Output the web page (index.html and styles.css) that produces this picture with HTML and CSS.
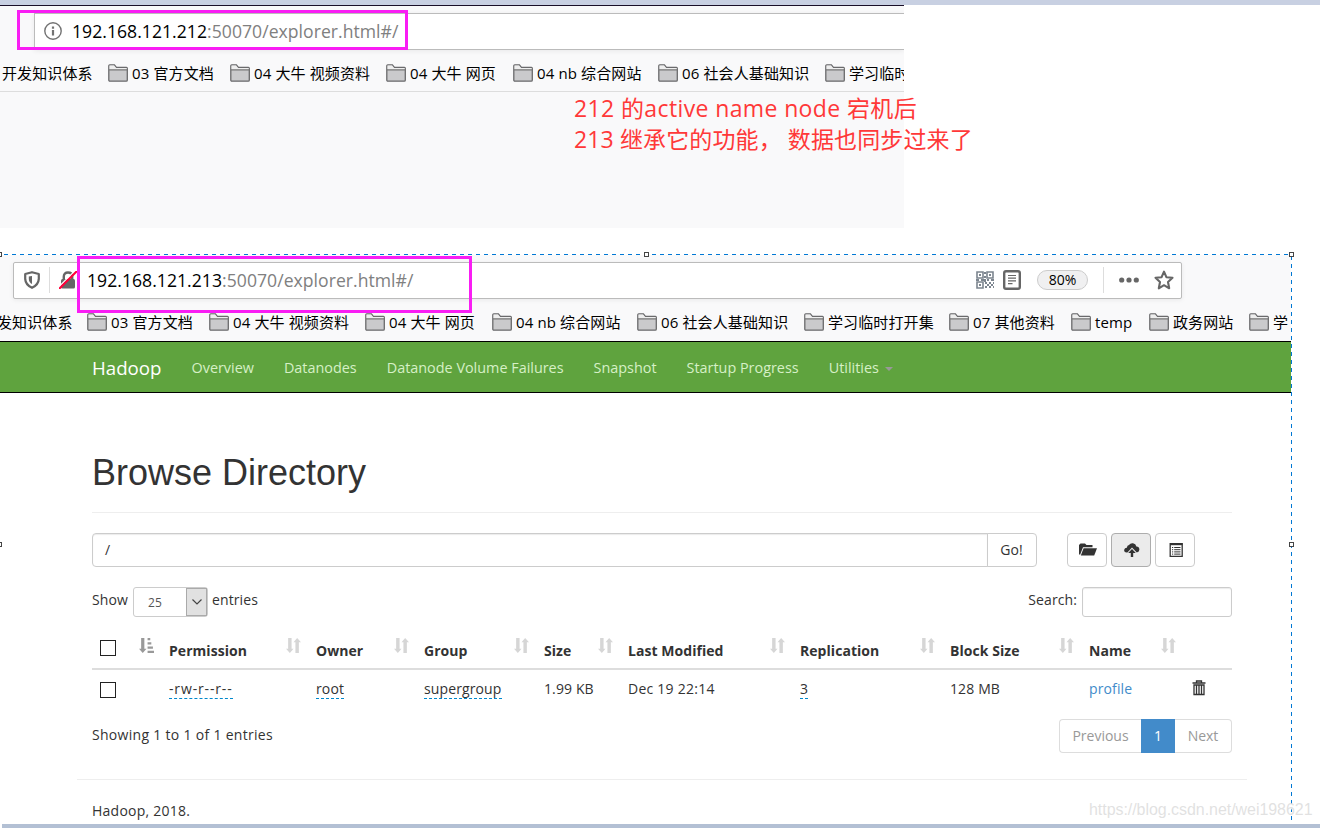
FILE: index.html
```html
<!DOCTYPE html>
<html lang="zh-CN">
  <head>
    <meta charset="UTF-8" />
    <meta name="viewport" content="width=device-width, initial-scale=1.0" />
    <title>Browsing HDFS</title>
    <link rel="stylesheet" href="styles.css">
  </head>
  <body>
    <!-- shared icons -->
    <svg class="defs">
      <symbol id="folder" viewBox="0 0 20 18">
        <path d="M.8 16V1.8Q.8.8 1.8.8H6.4L8.4 3.4H18.5Q19.3 3.4 19.3 4.4V16Q19.3 17.2 18.2 17.2H1.9Q.8 17.2.8 16Z" fill="#cacacc" stroke="#6a6a6c" stroke-width="1.3" />
        <path d="M1.5 1.5H6L8 4.1H18.6V5.2H1.5Z" fill="#eee" />
        <path d="M1 5.9H19" stroke="#777" stroke-width="1.2" />
      </symbol>
      <symbol id="sort" viewBox="0 0 14 14">
        <path d="M2 0H5.2V10H7L3.6 14 0 10H2ZM8.8 14H12V4H14L10.4 0 7 4H8.8Z" />
      </symbol>
      <symbol id="sort-asc" viewBox="0 0 14 14">
        <path d="M2 0H5V10H7L3.5 14 0 10H2ZM8 0H10.5V2H8ZM8 4H11.5V6H8ZM8 8H13V10H8ZM8 12H14V14H8Z" />
      </symbol>
    </svg>

    <div class="top-strip"></div>

    <section class="window window-old">
      <div class="url-bar url-old">
        <svg class="info" viewBox="0 0 18 18" fill="none" stroke="#737373">
          <circle cx="9" cy="9" r="8.2" stroke-width="1.4" />
          <path d="M9 8V13.5M9 4.5V6.7" stroke-width="2.2" />
        </svg>
        <span class="url"><b>192.168.121.212</b>:50070/explorer.html#/</span>
      </div>
      <div class="bookmarks">
        <span class="mark">开发知识体系</span>
        <span class="mark"><svg><use href="#folder" /></svg>03 官方文档</span>
        <span class="mark"><svg><use href="#folder" /></svg>04 大牛 视频资料</span>
        <span class="mark"><svg><use href="#folder" /></svg>04 大牛 网页</span>
        <span class="mark"><svg><use href="#folder" /></svg>04 nb 综合网站</span>
        <span class="mark"><svg><use href="#folder" /></svg>06 社会人基础知识</span>
        <span class="mark"><svg><use href="#folder" /></svg>学习临时</span>
      </div>
    </section>

    <section class="window window-new">
      <div class="url-bar url-new">
        <svg class="shield" viewBox="0 0 16 18">
          <path d="M8 1.2 14.8 3V8.2Q14.4 14 8 16.8 1.6 14 1.2 8.2V3Z" fill="none" stroke="#666" stroke-width="2.2" stroke-linejoin="round" />
          <path d="M8 5V13Q5 11.5 4.8 8V5.6Z" fill="#666" />
        </svg>
        <i class="divider"></i>
        <svg class="lock" viewBox="0 0 18 18">
          <path d="M4.8 9V5.5Q4.8 1.5 9 1.5T13.2 5.5V9" fill="none" stroke="#666" stroke-width="2.4" />
          <rect x="2" y="8" width="14" height="9.5" rx="1.5" fill="#666" />
          <path d="M-.3 16 15.7 0" stroke="#fff" stroke-width="1.2" />
          <path d="M.5 17.5 17.5.5" stroke="#ff0039" stroke-width="2" stroke-linecap="round" />
        </svg>
        <span class="url"><b>192.168.121.213</b>:50070/explorer.html#/</span>
        <div class="actions">
          <svg class="qr" viewBox="0 0 18 18" fill="none" stroke="#7c858f">
            <path d="M1 1H7V7H1ZM11 1H17V7H11ZM1 11H7V17H1Z" stroke-width="1.6" />
            <path d="M3 4H5M13 4H15M3 14H5M8 2H10M8 6H10M0 9H3M5 9H8M9 8V11M11 9H13M15 9H18" stroke-width="2" />
            <path d="M9 12H18M11 14H18M9 16H18" stroke-width="2" stroke-dasharray="2" />
          </svg>
          <svg class="reader" viewBox="0 0 18 20" fill="none" stroke="#666">
            <rect x="1.2" y="1.2" width="15.6" height="17.6" rx="1.8" stroke-width="2.4" />
            <path d="M5 5.5H13M5 8.2H13M5 10.9H13M5 13.6H9.5" stroke-width="1.2" />
          </svg>
          <span class="zoom">80%</span>
          <i class="divider"></i>
          <svg class="dots" viewBox="0 0 20 6" fill="#666">
            <circle cx="2.7" cy="3" r="2.6" /><circle cx="10" cy="3" r="2.6" /><circle cx="17.3" cy="3" r="2.6" />
          </svg>
          <svg class="star" viewBox="0 0 20 20">
            <path d="M10 1.7 12.4 7.2 18.5 7.8 14 12 15.2 18.3 10 15.2 4.8 18.3 6 12 1.5 7.8 7.6 7.2Z" fill="none" stroke="#666" stroke-width="2.1" stroke-linejoin="round" />
          </svg>
        </div>
      </div>
      <div class="bookmarks">
        <span class="mark">发知识体系</span>
        <span class="mark"><svg><use href="#folder" /></svg>03 官方文档</span>
        <span class="mark"><svg><use href="#folder" /></svg>04 大牛 视频资料</span>
        <span class="mark"><svg><use href="#folder" /></svg>04 大牛 网页</span>
        <span class="mark"><svg><use href="#folder" /></svg>04 nb 综合网站</span>
        <span class="mark"><svg><use href="#folder" /></svg>06 社会人基础知识</span>
        <span class="mark"><svg><use href="#folder" /></svg>学习临时打开集</span>
        <span class="mark"><svg><use href="#folder" /></svg>07 其他资料</span>
        <span class="mark"><svg><use href="#folder" /></svg>temp</span>
        <span class="mark"><svg><use href="#folder" /></svg>政务网站</span>
        <span class="mark"><svg><use href="#folder" /></svg>学</span>
      </div>
    </section>

    <nav class="navbar">
      <a class="brand">Hadoop</a>
      <a>Overview</a>
      <a>Datanodes</a>
      <a>Datanode Volume Failures</a>
      <a>Snapshot</a>
      <a>Startup Progress</a>
      <a>Utilities <i class="caret"></i></a>
    </nav>

    <main class="container">
      <h1>Browse Directory</h1>

      <div class="toolbar">
        <div class="path">/</div>
        <div class="go">Go!</div>
        <div class="btn">
          <svg viewBox="0 0 18 14" fill="#333">
            <path d="M0 11V2L1.5.5H6L7.5 2H13.5V4.2H4L1 12Z" />
            <path d="M4.6 5.2H18L15.2 12.6H1.8Z" />
          </svg>
        </div>
        <div class="btn active">
          <svg viewBox="0 0 18 14" fill="#333">
            <path d="M3.6 9.6Q.8 9.4 1.2 6.8 1.6 5 3.8 4.8 4.2 2.2 6 2 7.4-.2 10 .2 12.8.6 13.4 3.4 16.3 3.4 16.4 6.4 16.5 9 13.8 9.4L9 4.6 4.4 9.6Z" />
            <path d="M9 6 12.8 10H10.2V14H7.8V10H5.2Z" />
          </svg>
        </div>
        <div class="btn">
          <svg viewBox="0 0 18 14">
            <path d="M3.2.6H15.2V13.4H3.2Z" fill="#fff" stroke="#333" stroke-width="1.3" />
            <path d="M3 1.2H15.5" stroke="#333" stroke-width="2" />
            <path d="M5 4.5H6.2M7.2 4.5H13.5M5 6.7H6.2M7.2 6.7H13.5M5 8.9H6.2M7.2 8.9H13.5M5 11.1H6.2M7.2 11.1H13.5" stroke="#333" />
          </svg>
        </div>
      </div>

      <div class="filters">
        <span class="show">Show</span>
        <div class="select">
          <span>25</span>
          <i><svg viewBox="0 0 10 6"><path d="M.5.5 5 5 9.5.5" fill="none" stroke="#444" stroke-width="1.2" /></svg></i>
        </div>
        <span>entries</span>
        <span class="search-label">Search:</span>
        <div class="search"></div>
      </div>

      <div class="grid head">
        <div><i class="check"></i><svg class="asc"><use href="#sort-asc" /></svg></div>
        <div>Permission<svg><use href="#sort" /></svg></div>
        <div>Owner<svg><use href="#sort" /></svg></div>
        <div>Group<svg><use href="#sort" /></svg></div>
        <div>Size<svg><use href="#sort" /></svg></div>
        <div>Last Modified<svg><use href="#sort" /></svg></div>
        <div>Replication<svg><use href="#sort" /></svg></div>
        <div>Block Size<svg><use href="#sort" /></svg></div>
        <div>Name<svg><use href="#sort" /></svg></div>
        <div></div>
      </div>
      <div class="grid row">
        <div><i class="check"></i></div>
        <div><span class="editable perm">-rw-r--r--</span></div>
        <div><span class="editable">root</span></div>
        <div><span class="editable">supergroup</span></div>
        <div>1.99 KB</div>
        <div class="date">Dec 19 22:14</div>
        <div><span class="editable">3</span></div>
        <div>128 MB</div>
        <div><a class="link">profile</a></div>
        <div>
          <svg class="trash" viewBox="0 0 14 16" fill="none" stroke="#333">
            <path d="M.5 3H13.5M4.5 2.5V1H9.5V2.5" stroke-width="1.3" />
            <path d="M2 5H12V14.5H2ZM4.5 5V14M7 5V14M9.5 5V14" stroke-width="1.3" />
          </svg>
        </div>
      </div>

      <div class="table-footer">
        <span class="count">Showing 1 to 1 of 1 entries</span>
        <div class="pages">
          <span class="prev">Previous</span>
          <span class="current">1</span>
          <span class="next">Next</span>
        </div>
      </div>

      <footer>Hadoop, 2018.</footer>
    </main>

    <!-- annotations drawn over the windows -->
    <div class="box box-old"></div>
    <div class="box box-new"></div>
    <div class="note">
      <p class="wide">212 的active name node 宕机后</p>
      <p>213 继承它的功能， 数据也同步过来了</p>
    </div>
    <div class="dash-top"></div>
    <div class="dash-right"></div>
    <i class="handle h1"></i>
    <i class="handle h2"></i>
    <i class="handle h3"></i>
    <i class="handle h4"></i>
    <i class="handle h5"></i>
    <div class="bottom-strip"></div>
    <div class="watermark">https://blog.csdn.net/wei198621</div>
  </body>
</html>
```
FILE: styles.css
```css
* {
  margin: 0;
  padding: 0;
  box-sizing: border-box;
}

body {
  position: relative;
  width: 1320px;
  height: 828px;
  overflow: hidden;
  background: #fff;
  color: #333;
  font-family: 'Open Sans', 'Noto Sans CJK SC', sans-serif;
  font-size: 14px;
  line-height: 20px;
}

svg {
  flex: none;
  display: block;
}

.defs {
  position: absolute;
  width: 0;
  height: 0;
}

.top-strip {
  height: 5px;
  background: #c8d0e2;
}

/* Browser windows */
.window {
  overflow: hidden;
  background: #f9f9fa;
}

.window-old {
  width: 904px;
  height: 223px;
  border-top: 1px solid #1a0f28;
}

.window-new {
  width: 1291px;
  height: 86px;
  margin-top: 27px;
  padding-top: 7px;
}

.url-bar {
  display: flex;
  align-items: center;
  height: 37px;
  background: #fff;
  border: 1px solid #bbb;
  box-shadow: 0 1px 5px rgba(0, 0, 0, 0.07);
}

.url-old {
  margin: 7px 0 0 34px;
  border-right: 0;
  padding: 0 0 2px 9px;
}

.url-new {
  width: 1169px;
  margin-left: 13px;
  padding: 0 7px 2px 10px;
  border-radius: 2px;
}

.url {
  color: #808080;
  font-size: 17.6px;
  letter-spacing: 0.03px;
}

.url b {
  color: #000;
  font-weight: normal;
}

.info {
  width: 18px;
  height: 18px;
  margin-right: 10px;
}

.shield {
  width: 16px;
  height: 18px;
}

.divider {
  width: 1px;
  height: 26px;
  margin: 0 9px;
  background: #ddd;
}

.lock {
  width: 18px;
  height: 18px;
  margin-right: 10px;
}

.actions {
  display: flex;
  align-items: center;
  margin-left: auto;
}

.qr {
  width: 18px;
  height: 18px;
}

.reader {
  width: 18px;
  height: 20px;
  margin: 0 16px 0 9px;
}

.zoom {
  width: 51px;
  height: 20px;
  border: 1px solid #ccc;
  border-radius: 10px;
  background: #f0f0f1;
  color: #000;
  line-height: 18px;
  text-align: center;
}

.actions .divider {
  margin: 0 15px;
}

.dots {
  width: 20px;
  height: 6px;
}

.star {
  width: 20px;
  height: 20px;
  margin-left: 15px;
}

.bookmarks {
  display: grid;
  grid-template-columns: 106px 122px 156px 127px 145px 167px 145px 122px 78px 100px 42px;
  align-items: center;
  height: 42px;
  padding-top: 4px;
  color: #000;
  font-size: 15px;
  white-space: nowrap;
}

.window-old .bookmarks {
  padding-left: 2px;
  border-bottom: 1px solid #ddd;
}

.window-new .bookmarks {
  grid-template-columns: 90px 122px 156px 127px 145px 167px 145px 122px 78px 100px 42px;
  margin-left: -3px;
}

.mark {
  display: flex;
  align-items: center;
  gap: 4px;
  letter-spacing: 0.12px;
}

.mark svg {
  width: 20px;
  height: 18px;
}

/* Hadoop page */
.navbar {
  display: flex;
  align-items: center;
  gap: 30px;
  width: 1291px;
  height: 52px;
  padding: 2px 0 0 92px;
  border-top: 1px solid #000;
  border-bottom: 1px solid #000;
  background: #5fa33e;
  color: #d6f0c6;
  font-size: 14.4px;
  white-space: nowrap;
}

.navbar .brand {
  color: #fff;
  font-size: 18.7px;
}

.caret {
  display: inline-block;
  margin-left: 2px;
  border: 4px solid transparent;
  border-top-color: #999;
  border-bottom: 0;
  vertical-align: middle;
}

.container {
  width: 1140px;
  margin-left: 92px;
}

h1 {
  height: 120px;
  padding-top: 60px;
  border-bottom: 1px solid #eee;
  font: 36px/40px 'Liberation Sans', Arial, sans-serif;
}

.toolbar {
  display: flex;
  margin-top: 20px;
  height: 34px;
}

.path,
.go {
  border: 1px solid #ccc;
  line-height: 32px;
}

.path {
  width: 896px;
  padding-left: 12px;
  border-radius: 4px 0 0 4px;
  box-shadow: inset 0 1px 1px rgba(0, 0, 0, 0.08);
}

.go {
  width: 50px;
  margin: 0 30px 0 -1px;
  padding-right: 1px;
  border-radius: 0 4px 4px 0;
  text-align: center;
}

.btn {
  display: flex;
  justify-content: center;
  align-items: center;
  width: 40px;
  margin-right: 4px;
  padding-left: 2px;
  border: 1px solid #ccc;
  border-radius: 4px;
}

.btn.active {
  border-color: #adadad;
  background: #ebebeb;
}

.btn svg {
  width: 18px;
  height: 14px;
}

.filters {
  display: flex;
  height: 30px;
  margin-top: 20px;
  line-height: 26px;
  letter-spacing: 0.1px;
}

.show {
  width: 36px;
}

.select {
  display: flex;
  justify-content: space-between;
  width: 75px;
  margin: 0 4px 0 5px;
  padding-left: 14px;
  border: 1px solid #ccc;
  border-radius: 3px;
  color: #555;
  font-size: 12px;
  line-height: 29px;
}

.select i {
  display: flex;
  justify-content: center;
  align-items: center;
  width: 21px;
  border: 1px solid #aaa;
  background: #e1e1e1;
}

.select svg {
  width: 10px;
  height: 6px;
}

.search-label {
  margin-left: auto;
}

.search {
  width: 150px;
  margin-left: 5px;
  border: 1px solid #ccc;
  border-radius: 3px;
  box-shadow: inset 0 1px 1px rgba(0, 0, 0, 0.08);
}

.grid {
  display: grid;
  grid-template-columns: 69px 147px 108px 120px 84px 172px 150px 139px 102px 49px;
}

.grid > div {
  display: flex;
  padding: 0 7px 0 8px;
  white-space: nowrap;
}

.head {
  height: 53px;
  border-bottom: 2px solid #ddd;
  font-weight: bold;
  padding-top: 20px;
  line-height: 27px;
  letter-spacing: 0.05px;
}

.head svg {
  width: 15px;
  height: 15px;
  margin: 1px 0 0 auto;
  fill: #d6d6d6;
}

.head .asc {
  fill: #999;
}

.check {
  width: 16px;
  height: 16px;
  margin-top: 3px;
  border: 1px solid #222;
}

.row {
  height: 49px;
  padding-top: 9px;
  letter-spacing: 0.12px;
}

.editable {
  height: 20px;
  border-bottom: 1px dashed #0088cc;
}

.perm {
  letter-spacing: 0.85px;
}

.date {
  letter-spacing: 0.25px;
}

.link {
  color: #428bca;
}

.trash {
  width: 14px;
  height: 16px;
  margin: 1px 0 0 1px;
}

.table-footer {
  display: flex;
  justify-content: space-between;
  height: 34px;
  line-height: 32px;
}

.count {
  letter-spacing: 0.3px;
}

.pages {
  display: flex;
  width: 173px;
  color: #999;
  text-align: center;
}

.pages span {
  border: 1px solid #ddd;
}

.pages .prev {
  width: 82px;
  border-right: 0;
  border-radius: 4px 0 0 4px;
}

.pages .current {
  width: 34px;
  border-color: #428bca;
  background: #428bca;
  color: #fff;
}

.pages .next {
  width: 57px;
  border-left: 0;
  border-radius: 0 4px 4px 0;
}

footer {
  margin: 26px -15px 0;
  padding: 21px 15px 0;
  border-top: 1px solid #eee;
  letter-spacing: 0.25px;
}

/* Annotations */
.box {
  position: absolute;
  border: 3px solid #f91df4;
}

.box-old {
  left: 17px;
  top: 10px;
  width: 391px;
  height: 40px;
}

.box-new {
  left: 77px;
  top: 256px;
  width: 395px;
  height: 57px;
}

.note {
  position: absolute;
  left: 574px;
  top: 93px;
  color: #ff3838;
  font-size: 23px;
  line-height: 31px;
  letter-spacing: 0.12px;
  white-space: nowrap;
}

.note .wide {
  letter-spacing: 0.38px;
}

.dash-top {
  position: absolute;
  left: 4px;
  top: 254px;
  width: 1287px;
  height: 1px;
  background: repeating-linear-gradient(90deg, #0078d4 0 4px, transparent 4px 8px);
}

.dash-right {
  position: absolute;
  left: 1291px;
  top: 256px;
  width: 1px;
  height: 572px;
  background: repeating-linear-gradient(#0078d4 0 4px, #fff 4px 8px);
}

.handle {
  position: absolute;
  width: 5px;
  height: 5px;
  border: 1px solid #444;
  background: #fff;
}

.handle.h1 {
  left: -3px;
  top: 252px;
}

.handle.h2 {
  left: 644px;
  top: 252px;
}

.handle.h3 {
  left: 1289px;
  top: 252px;
}

.handle.h4 {
  left: -3px;
  top: 542px;
}

.handle.h5 {
  left: 1289px;
  top: 542px;
}

.bottom-strip {
  position: absolute;
  left: 2px;
  right: 0;
  bottom: 0;
  height: 4px;
  background: #b3c0d4;
}

.watermark {
  position: absolute;
  left: 1089px;
  top: 800px;
  color: rgba(220, 220, 220, 0.85);
  font: 16px/20px 'Liberation Sans', Arial, sans-serif;
  letter-spacing: -0.05px;
  text-shadow: 1px 1px 0 #fff;
}
```
